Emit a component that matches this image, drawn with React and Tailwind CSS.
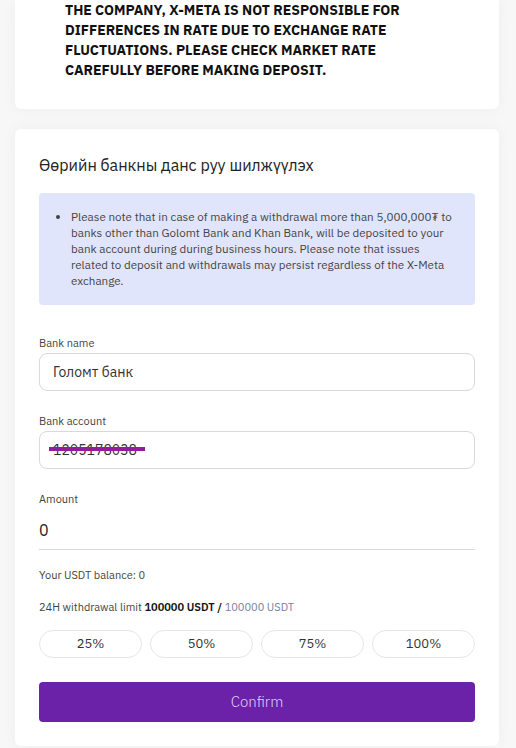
import { useState } from "react";

const font = { fontFamily: "'IBM Plex Sans', 'Noto Sans', 'Open Sans', sans-serif" };

export default function App() {
    const [amount, setAmount] = useState("0");

    return (
        <div className="min-h-screen bg-[#f7f7f7] overflow-hidden" style={font}>
            <div className="pl-[15px] pr-[17px]">
                {/* notice card */}
                <div className="bg-white rounded-b-md shadow-[0_0_16px_rgba(0,0,0,0.04)] pl-[50px] pr-[74px] pb-[29px]">
                    <p className="text-[14px] leading-[20px] font-bold text-[#111] uppercase">
                        The company, X-Meta is not responsible for differences in rate due to exchange rate fluctuations. Please check market rate carefully before making deposit.
                    </p>
                </div>

                {/* withdraw card */}
                <div className="mt-[20px] bg-white rounded-md shadow-[0_0_16px_rgba(0,0,0,0.04)] px-[24px] pt-[24px] pb-[24px]">
                    <h2 className="text-[16px] leading-[24px] text-[#222]">Өөрийн банкны данс руу шилжүүлэх</h2>

                    <div className="mt-[16px] bg-[#e0e5fb] rounded-[4px] pl-[18px] pr-[20px] py-[16px]">
                        <ul className="list-disc pl-[14px] text-[11.6px] leading-[16px] text-[#444]">
                            <li>
                                Please note that in case of making a withdrawal more than 5,000,000₮ to banks other than Golomt Bank and Khan Bank, will be deposited to your bank account during during business hours. Please note that issues related to deposit and withdrawals may persist regardless of the X-Meta exchange.
                            </li>
                        </ul>
                    </div>

                    <div className="mt-[30px]">
                        <label className="block text-[11px] leading-[16px] text-[#444]">Bank name</label>
                        <div className="mt-[2px] h-[38px] border border-[#d8d8de] rounded-[8px] flex items-center px-[13px] text-[14px] text-[#333]">
                            Голомт банк
                        </div>
                    </div>

                    <div className="mt-[22px]">
                        <label className="block text-[11px] leading-[16px] text-[#444]">Bank account</label>
                        <div className="mt-[2px] h-[38px] border border-[#d8d8de] rounded-[8px] flex items-center px-[13px] text-[14px] text-[#333]">
                            <span className="relative">
                                1205178038
                                <span className="absolute left-[-4px] right-[-8px] top-[7px] h-[4px] bg-[#8e1f96]" />
                            </span>
                        </div>
                    </div>

                    <div className="mt-[22px]">
                        <label className="block text-[11px] leading-[16px] text-[#444]">Amount</label>
                        <input
                            value={amount}
                            onChange={(e) => setAmount(e.target.value)}
                            className="mt-[3px] w-full h-[40px] border-b border-[#d8d8de] text-[16px] text-[#222] outline-none bg-transparent"
                            style={font}
                        />
                    </div>

                    <p className="mt-[17px] text-[11px] leading-[16px] text-[#444]">Your USDT balance: 0</p>
                    <p className="mt-[16px] text-[11px] leading-[16px] text-[#444]">
                        24H withdrawal limit <span className="font-semibold text-[#111]">100000 USDT /</span>{" "}
                        <span className="text-[#7b80a0]">100000 USDT</span>
                    </p>

                    <div className="mt-[15px] grid grid-cols-4 gap-[8px]">
                        {["25%", "50%", "75%", "100%"].map((p) => (
                            <button
                                key={p}
                                onClick={() => setAmount("0")}
                                className="h-[28px] rounded-full border border-[#e6e6e6] text-[13px] text-[#333] bg-white"
                            >
                                {p}
                            </button>
                        ))}
                    </div>

                    <button className="mt-[24px] w-full h-[40px] rounded-[4px] bg-[#6b21a8] text-[15px] font-light text-[#e0d0f2]">
                        Confirm
                    </button>
                </div>
            </div>
        </div>
    );
}
